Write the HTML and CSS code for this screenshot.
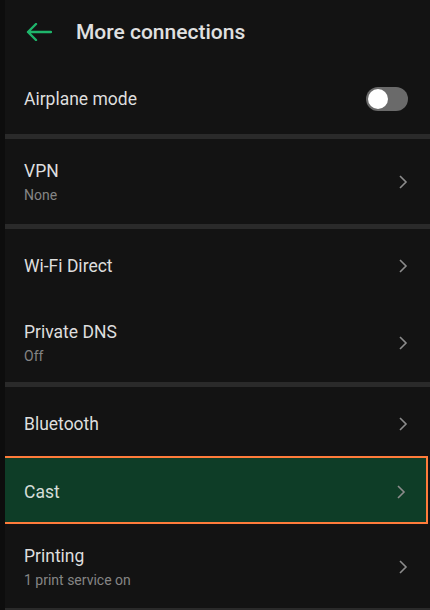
FILE: index.html
```html
<!DOCTYPE html>
<html lang="en">
<head>
    <meta charset="UTF-8">
    <meta name="viewport" content="width=device-width, initial-scale=1.0">
    <title>More connections</title>
    <link rel="stylesheet" href="styles.css">
</head>
<body>
    <div class="screen">
        <header class="topbar">
            <svg class="back" width="26" height="18" viewBox="0 0 26 18">
                <path d="M25 9H2M10 1L2 9l8 8" fill="none" stroke="#1fb56b" stroke-width="2.4" stroke-linecap="round" stroke-linejoin="round"/>
            </svg>
            <h1>More connections</h1>
        </header>

        <div class="row airplane">
            <span class="label">Airplane mode</span>
            <div class="toggle"><div class="knob"></div></div>
        </div>

        <div class="divider"></div>

        <div class="row double vpn">
            <div class="text">
                <span class="label">VPN</span>
                <span class="sub">None</span>
            </div>
            <svg class="chev" width="10" height="16" viewBox="0 0 10 16"><path d="M2 2l6 6-6 6" fill="none" stroke="#8c8c8c" stroke-width="1.6"/></svg>
        </div>

        <div class="divider"></div>

        <div class="row wifi">
            <span class="label">Wi-Fi Direct</span>
            <svg class="chev" width="10" height="16" viewBox="0 0 10 16"><path d="M2 2l6 6-6 6" fill="none" stroke="#8c8c8c" stroke-width="1.6"/></svg>
        </div>

        <div class="row double dns">
            <div class="text">
                <span class="label">Private DNS</span>
                <span class="sub">Off</span>
            </div>
            <svg class="chev" width="10" height="16" viewBox="0 0 10 16"><path d="M2 2l6 6-6 6" fill="none" stroke="#8c8c8c" stroke-width="1.6"/></svg>
        </div>

        <div class="divider"></div>

        <div class="row bluetooth">
            <span class="label">Bluetooth</span>
            <svg class="chev" width="10" height="16" viewBox="0 0 10 16"><path d="M2 2l6 6-6 6" fill="none" stroke="#8c8c8c" stroke-width="1.6"/></svg>
        </div>

        <div class="row cast selected">
            <span class="label">Cast</span>
            <svg class="chev" width="10" height="16" viewBox="0 0 10 16"><path d="M2 2l6 6-6 6" fill="none" stroke="#8c8c8c" stroke-width="1.6"/></svg>
        </div>

        <div class="row double printing">
            <div class="text">
                <span class="label">Printing</span>
                <span class="sub">1 print service on</span>
            </div>
            <svg class="chev" width="10" height="16" viewBox="0 0 10 16"><path d="M2 2l6 6-6 6" fill="none" stroke="#8c8c8c" stroke-width="1.6"/></svg>
        </div>

        <div class="divider thin"></div>
    </div>
</body>
</html>
```

FILE: styles.css
```css
body {
    margin: 0;
    background: #0d0d0d;
    font-family: Roboto, "Liberation Sans", sans-serif;
    color: #e2e2e2;
}
.screen {
    margin-left: 5px;
    height: 610px;
    background: #131313;
    overflow: hidden;
}
.topbar {
    height: 64px;
    display: flex;
    align-items: center;
    padding-left: 21px;
}
.back {
    margin-right: 24px;
}
h1 {
    margin: 0;
    font-size: 21px;
    font-weight: 500;
    color: #e0e0e0;
}
.row {
    display: flex;
    align-items: center;
    justify-content: space-between;
    padding: 0 22px 0 19px;
    box-sizing: border-box;
}
.label {
    font-size: 17.5px;
    color: #dedede;
}
.text {
    display: flex;
    flex-direction: column;
    gap: 6px;
}
.sub {
    font-size: 14px;
    color: #858585;
}
.airplane { height: 70px; }
.vpn { height: 85px; }
.wifi { height: 74px; }
.dns { height: 79px; }
.bluetooth {
    height: 69px;
    padding-top: 4px;
}
.printing {
    height: 84px;
    padding-top: 2px;
}
.cast {
    height: 68px;
    margin-left: -2px;
    margin-right: 2px;
    padding-left: 19px;
    padding-right: 20px;
    padding-top: 3px;
}
.selected {
    background: #0e3d27;
    border: 2px solid #ff7c3b;
}
.selected .label {
    color: #d5ddd8;
}
.divider {
    height: 5px;
    background: #2a2a2a;
}
.divider.thin {
    height: 3px;
}
.toggle {
    width: 42px;
    height: 24px;
    border-radius: 12px;
    background: #6a6a6a;
    display: flex;
    align-items: center;
    padding-left: 2px;
    box-sizing: border-box;
}
.knob {
    width: 20px;
    height: 20px;
    border-radius: 50%;
    background: #fff;
}
```
